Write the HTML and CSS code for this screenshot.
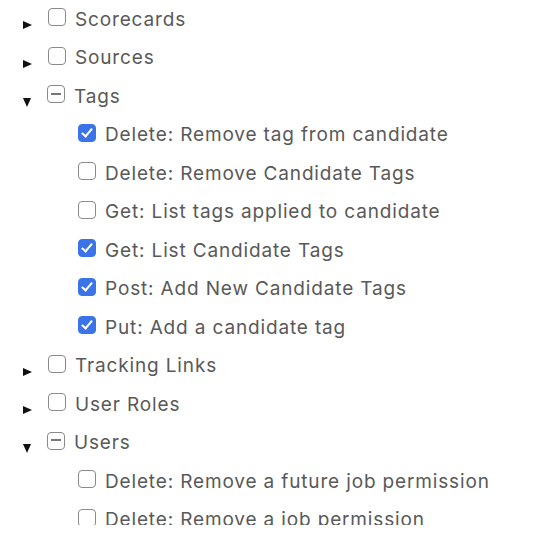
FILE: index.html
```html
<!DOCTYPE html>
<html lang="en">
<head>
    <meta charset="UTF-8">
    <meta name="viewport" content="width=device-width, initial-scale=1.0">
    <title>Permissions</title>
    <link rel="stylesheet" href="styles.css">
</head>
<body>
    <div class="panel">
    <ul class="tree">
        <li class="node">
            <div class="row"><span class="toggle closed"></span><span class="box"></span><span class="label">Scorecards</span></div>
        </li>
        <li class="node">
            <div class="row"><span class="toggle closed"></span><span class="box"></span><span class="label">Sources</span></div>
        </li>
        <li class="node">
            <div class="row"><span class="toggle open"></span><span class="box partial"></span><span class="label">Tags</span></div>
            <ul class="children">
                <li class="row"><span class="box checked"></span><span class="label">Delete: Remove tag from candidate</span></li>
                <li class="row"><span class="box"></span><span class="label">Delete: Remove Candidate Tags</span></li>
                <li class="row"><span class="box"></span><span class="label">Get: List tags applied to candidate</span></li>
                <li class="row"><span class="box checked"></span><span class="label">Get: List Candidate Tags</span></li>
                <li class="row"><span class="box checked"></span><span class="label">Post: Add New Candidate Tags</span></li>
                <li class="row"><span class="box checked"></span><span class="label">Put: Add a candidate tag</span></li>
            </ul>
        </li>
        <li class="node">
            <div class="row"><span class="toggle closed"></span><span class="box"></span><span class="label">Tracking Links</span></div>
        </li>
        <li class="node">
            <div class="row"><span class="toggle closed"></span><span class="box"></span><span class="label">User Roles</span></div>
        </li>
        <li class="node">
            <div class="row"><span class="toggle open"></span><span class="box partial"></span><span class="label">Users</span></div>
            <ul class="children">
                <li class="row"><span class="box"></span><span class="label">Delete: Remove a future job permission</span></li>
                <li class="row"><span class="box"></span><span class="label">Delete: Remove a job permission</span></li>
            </ul>
        </li>
    </ul>
    </div>
</body>
</html>
```

FILE: styles.css
```css
body {
    margin: 0;
    padding: 0;
    background-color: #ffffff;
    font-family: Inter, "Noto Sans", sans-serif;
    color: #595959;
}

.panel {
    height: 525px;
    overflow: hidden;
}

.tree,
.children {
    list-style: none;
    margin: 0;
    padding: 0;
}

.tree {
    padding-left: 23px;
}

.children {
    padding-left: 55px;
}

.row {
    display: flex;
    align-items: center;
    height: 38.5px;
    font-size: 19px;
    letter-spacing: 0.85px;
}

/* disclosure arrows */
.toggle {
    width: 0;
    height: 0;
    margin-right: 16px;
    margin-top: 12px;
}

.toggle.closed {
    border-top: 4.5px solid transparent;
    border-bottom: 4.5px solid transparent;
    border-left: 9px solid #111111;
}

.toggle.open {
    border-left: 4.5px solid transparent;
    border-right: 4.5px solid transparent;
    border-top: 9px solid #111111;
}

/* checkboxes */
.box {
    position: relative;
    box-sizing: border-box;
    width: 18px;
    height: 18px;
    margin-right: 9px;
    margin-top: -4px;
    border: 1.5px solid #8a8a8a;
    border-radius: 4px;
    flex-shrink: 0;
}

.box.checked {
    background-color: #3b74e8;
    border-color: #3b74e8;
}

.box.checked::after {
    content: "";
    position: absolute;
    left: 5px;
    top: 1px;
    width: 4px;
    height: 9px;
    border-right: 2.5px solid #ffffff;
    border-bottom: 2.5px solid #ffffff;
    transform: rotate(40deg);
}

.box.partial::after {
    content: "";
    position: absolute;
    left: 3px;
    right: 3px;
    top: 6.5px;
    height: 2px;
    background-color: #777777;
}

.label {
    white-space: nowrap;
}
```
